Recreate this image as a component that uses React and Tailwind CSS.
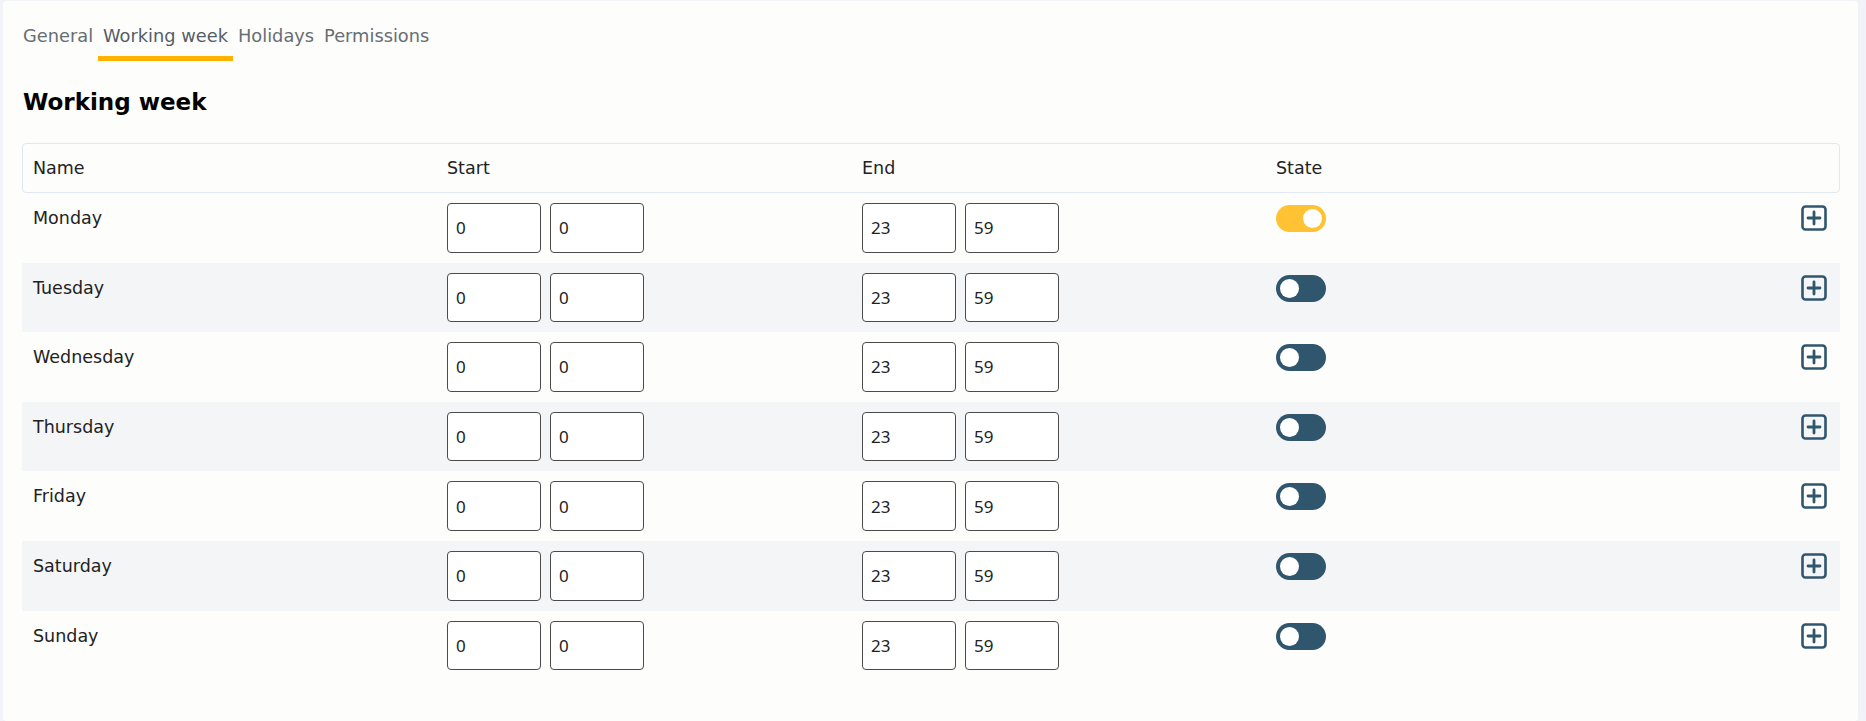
import React, { useState } from "react";

const tabs = ["General", "Working week", "Holidays", "Permissions"];

const initialDays = [
  { name: "Monday", on: true },
  { name: "Tuesday", on: false },
  { name: "Wednesday", on: false },
  { name: "Thursday", on: false },
  { name: "Friday", on: false },
  { name: "Saturday", on: false },
  { name: "Sunday", on: false },
];

const cols = "grid grid-cols-[414px_415px_414px_1fr_auto]";

const TimeInput = ({ value }) => (
  <input
    defaultValue={value}
    className="w-[94px] h-[49.6px] rounded-[4px] border border-[#4b4b4b] bg-white pl-[8px] text-[17px] text-[#222] outline-none font-['Noto_Sans',sans-serif]"
  />
);

const Toggle = ({ on, onClick }) => (
  <button
    onClick={onClick}
    className={`mt-[2px] flex h-[27px] w-[50px] items-center rounded-full px-[4px] ${
      on ? "bg-[#ffc233] justify-end" : "bg-[#30566e] justify-start"
    }`}
  >
    <span className="block h-[19px] w-[19px] rounded-full bg-white" />
  </button>
);

const PlusBox = () => (
  <svg width="26" height="26" viewBox="0 0 26 26" fill="none" className="mt-[2px]">
    <rect x="1.5" y="1.5" width="23" height="23" rx="3" stroke="#30566e" strokeWidth="2.6" />
    <path d="M13 7v12M7 13h12" stroke="#30566e" strokeWidth="2.8" strokeLinecap="round" />
  </svg>
);

export default function App() {
  const [days, setDays] = useState(initialDays);

  const flip = (i) =>
    setDays((d) => d.map((x, j) => (j === i ? { ...x, on: !x.on } : x)));

  return (
    <div className="min-h-screen bg-[#f2f3f6] pt-[1px] pl-[3px] pr-[8px] font-['DejaVu_Sans',sans-serif]">
      <div className="min-h-[720px] rounded-[4px] bg-[#fdfdfc] pt-[23px] pl-[19px] pr-[18px]">
        {/* Tabs */}
        <div className="flex">
          {tabs.map((t) => (
            <div
              key={t}
              className={`px-[5px] pb-2 text-[17.8px] leading-6 border-b-[5px] first:pl-[1px] ${
                t === "Working week"
                  ? "border-[#ffb300] text-[#555e66]"
                  : "border-transparent text-[#666d73]"
              }`}
            >
              {t}
            </div>
          ))}
        </div>

        <h1 className="mt-[25px] pl-[1px] text-[23px] leading-8 font-bold text-black">
          Working week
        </h1>

        {/* Table */}
        <div className="mt-[25px]">
          <div className={`${cols} rounded-[4px] border border-[#e2e8f0] py-[12px] text-[17.5px] leading-6 text-[#222]`}>
            <div className="px-[10px]">Name</div>
            <div className="px-[10px]">Start</div>
            <div className="px-[10px]">End</div>
            <div className="px-[10px]">State</div>
            <div />
          </div>

          {days.map((d, i) => (
            <div
              key={d.name}
              className={`${cols} border-x border-transparent py-[10px] ${
                i % 2 === 1 ? "bg-[#f4f5f7]" : ""
              }`}
            >
              <div className="px-[10px] pt-[3px] text-[17.5px] leading-6 text-[#222]">
                {d.name}
              </div>
              <div className="flex gap-[9px] px-[10px]">
                <TimeInput value="0" />
                <TimeInput value="0" />
              </div>
              <div className="flex gap-[9px] px-[10px]">
                <TimeInput value="23" />
                <TimeInput value="59" />
              </div>
              <div className="px-[10px]">
                <Toggle on={d.on} onClick={() => flip(i)} />
              </div>
              <div className="pr-[12px]">
                <PlusBox />
              </div>
            </div>
          ))}
        </div>
      </div>
    </div>
  );
}
